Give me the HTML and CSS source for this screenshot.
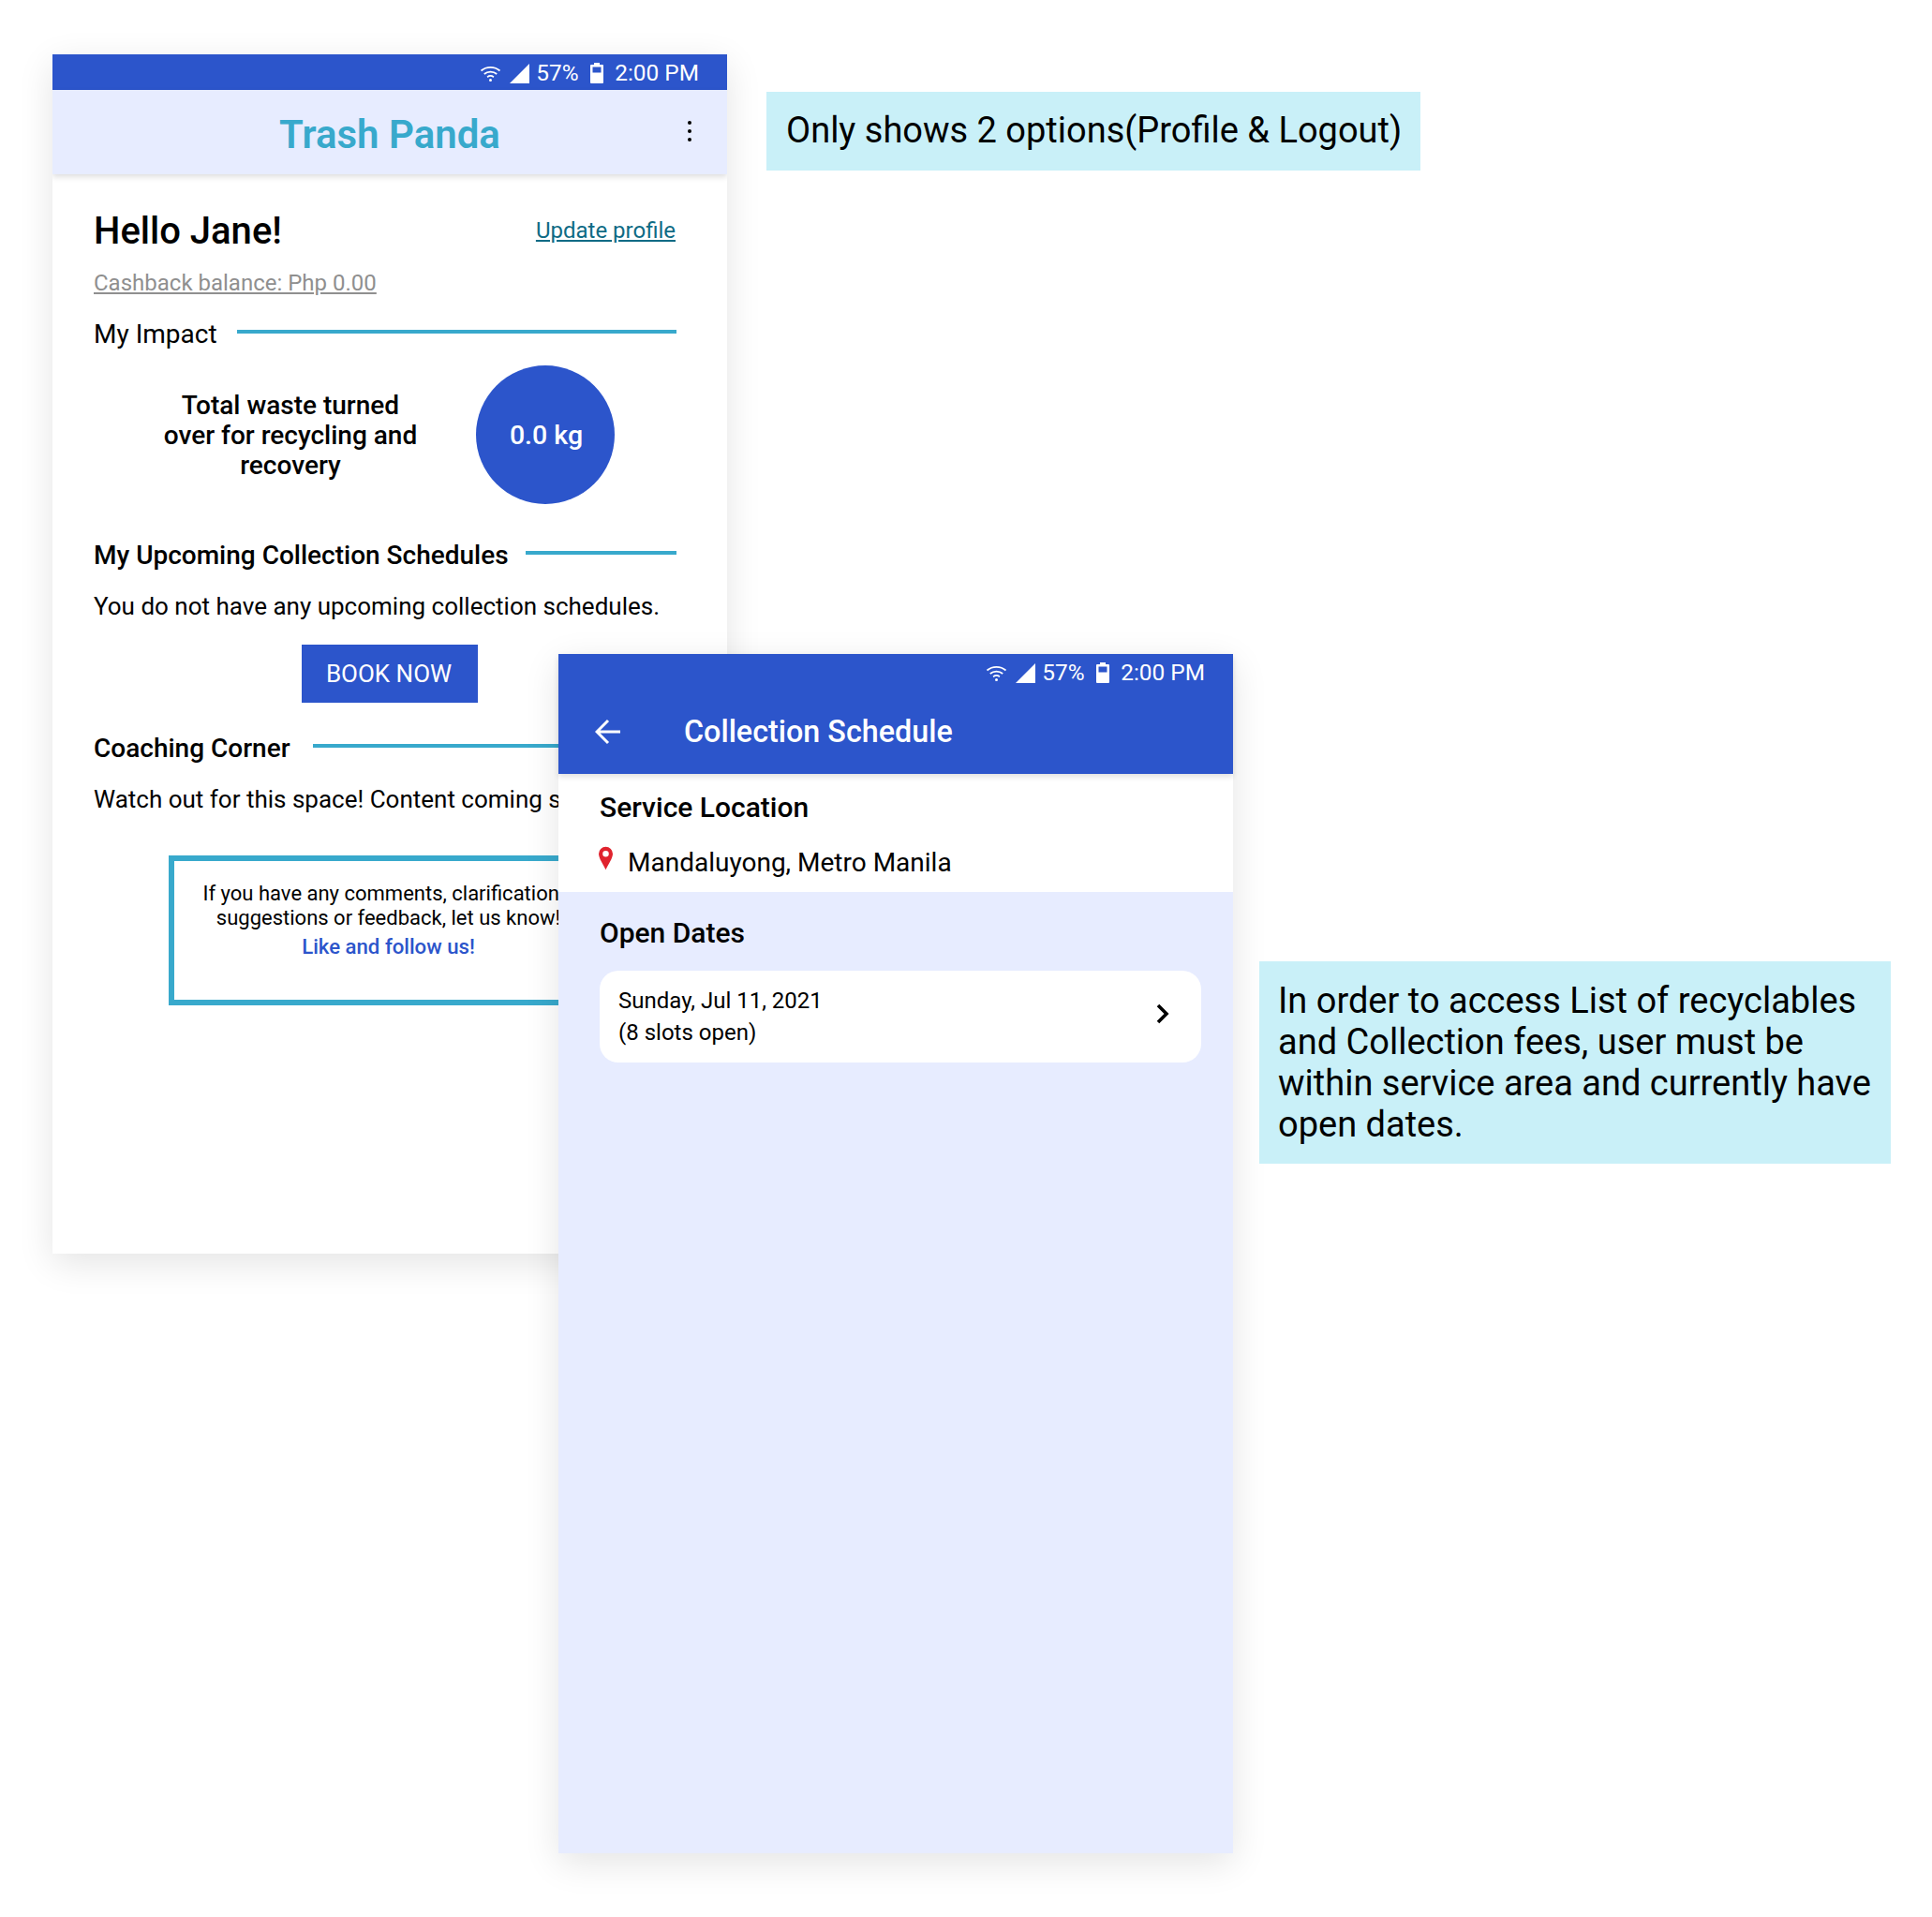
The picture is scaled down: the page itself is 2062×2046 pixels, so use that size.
FILE: index.html
```html
<!DOCTYPE html>
<html lang="en">
<head>
<meta charset="utf-8">
<title>Trash Panda</title>
<link rel="stylesheet" href="styles.css">
</head>
<body>
<section class="phone phone-home">
  <div class="status">
    <svg class="ic-wifi" viewBox="0 0 22 17"><path d="M1 5.5C6.6.6 15.4.6 21 5.5M4.3 9C8 5.8 14 5.8 17.7 9M7.6 12.2C9.500 10.800 12.500 10.800 14.400 12.200" fill="none" stroke="#fff" stroke-width="1.700"/><circle cx="11" cy="15.400" r="1.500" fill="#fff"/></svg>
    <svg class="ic-signal" viewBox="0 0 21 21"><path d="M21 0V21H0Z" fill="#fff"/></svg>
    <span class="pct">57%</span>
    <svg class="ic-batt" viewBox="0 0 14 22"><path d="M4 0H10V2H13A1 1 0 0 1 14 3V21A1 1 0 0 1 13 22H1A1 1 0 0 1 0 21V3A1 1 0 0 1 1 2H4Z" fill="#fff"/><rect x="2.500" y="4.500" width="9" height="6" fill="#2c55cb"/></svg>
    <span class="time">2:00 PM</span>
  </div>
  <header class="appbar">
    <h1 class="brand">Trash Panda</h1>
    <div class="kebab"><i></i><i></i><i></i></div>
  </header>
  <main class="home-body">
    <div class="hello-row">
      <h2 class="hello">Hello Jane!</h2>
      <a class="update">Update profile</a>
    </div>
    <a class="cashback">Cashback balance: Php 0.00</a>
    <div class="rule-head impact-head"><span>My Impact</span><b></b></div>
    <div class="impact">
      <p class="impact-text">Total waste turned<br>over for recycling and<br>recovery</p>
      <div class="circle">0.0 kg</div>
    </div>
    <div class="rule-head strong sched-head"><span>My Upcoming Collection Schedules</span><b></b></div>
    <p class="plain sched-text">You do not have any upcoming collection schedules.</p>
    <div class="book-wrap"><button class="book">BOOK NOW</button></div>
    <div class="rule-head strong coach-head"><span>Coaching Corner</span><b></b></div>
    <p class="plain coach-text">Watch out for this space! Content coming soon.</p>
    <div class="feedback">
      <p>If you have any comments, clarifications,<br>suggestions or feedback, let us know!</p>
      <a>Like and follow us!</a>
    </div>
  </main>
</section>

<section class="phone phone-sched">
  <div class="sched-top">
    <div class="status">
      <svg class="ic-wifi" viewBox="0 0 22 17"><path d="M1 5.5C6.6.6 15.4.6 21 5.5M4.3 9C8 5.8 14 5.8 17.7 9M7.6 12.2C9.500 10.800 12.500 10.800 14.400 12.200" fill="none" stroke="#fff" stroke-width="1.700"/><circle cx="11" cy="15.400" r="1.500" fill="#fff"/></svg>
      <svg class="ic-signal" viewBox="0 0 21 21"><path d="M21 0V21H0Z" fill="#fff"/></svg>
      <span class="pct">57%</span>
      <svg class="ic-batt" viewBox="0 0 14 22"><path d="M4 0H10V2H13A1 1 0 0 1 14 3V21A1 1 0 0 1 13 22H1A1 1 0 0 1 0 21V3A1 1 0 0 1 1 2H4Z" fill="#fff"/><rect x="2.500" y="4.500" width="9" height="6" fill="#2c55cb"/></svg>
      <span class="time">2:00 PM</span>
    </div>
    <div class="sched-bar">
      <svg class="ic-back" viewBox="0 0 28 28"><path d="M27 14H2M14 2L2 14L14 26" fill="none" stroke="#fff" stroke-width="3"/></svg>
      <h1 class="sched-title">Collection Schedule</h1>
    </div>
  </div>
  <div class="location">
    <h2 class="sub">Service Location</h2>
    <div class="loc-row">
      <svg class="ic-pin" viewBox="0 0 16 26"><path fill-rule="evenodd" d="M8 0A8 8 0 0 1 16 8C16 13 11 20 8 26C5 20 0 13 0 8A8 8 0 0 1 8 0ZM8 4.500A3.500 3.500 0 1 0 8 11.500A3.500 3.500 0 1 0 8 4.500Z" fill="#e0232e"/></svg>
      <span>Mandaluyong, Metro Manila</span>
    </div>
  </div>
  <div class="dates">
    <h2 class="sub">Open Dates</h2>
    <div class="date-card">
      <p>Sunday, Jul 11, 2021<br>(8 slots open)</p>
      <svg class="ic-chev" viewBox="0 0 14 22"><path d="M2 2L11 11L2 20" fill="none" stroke="#000" stroke-width="3.600"/></svg>
    </div>
  </div>
</section>

<aside class="note note-one">Only shows 2 options(Profile &amp; Logout)</aside>
<aside class="note note-two">In order to access List of recyclables and Collection fees, user must be within service area and currently have open dates.</aside>
</body>
</html>
```

FILE: styles.css
```css
* { box-sizing: border-box; }
html, body { margin: 0; padding: 0; background: #fff; }
body {
  position: relative;
  width: 2062px;
  height: 2046px;
  overflow: hidden;
  font-family: Roboto, "Liberation Sans", sans-serif;
  color: #000;
}
h1, h2, p { margin: 0; font-weight: 400; }

.phone {
  position: absolute;
  width: 720px;
  height: 1280px;
  box-shadow: 0 10px 36px rgba(0, 0, 0, .11);
  display: flex;
  flex-direction: column;
}
.phone-home { left: 56px; top: 58px; background: #fff; overflow: hidden; }
.phone-sched { left: 596px; top: 698px; background: #e7ecff; }

.status {
  height: 38px;
  flex: none;
  background: #2c55cb;
  color: #fff;
  display: flex;
  align-items: center;
  justify-content: flex-end;
  padding: 2px 30px 0 0;
  font-size: 24.400px;
  line-height: 1;
}
.ic-wifi { width: 23px; height: 17px; margin-right: 9px; }
.ic-signal { width: 21px; height: 21px; margin-right: 7px; }
.pct { width: 44px; margin-right: 14px; }
.ic-batt { width: 14px; height: 22px; margin-right: 12px; }

.appbar {
  height: 90px;
  background: #e7ecff;
  box-shadow: 0 3px 6px rgba(0, 0, 0, .13);
  position: relative;
  z-index: 1;
  flex: none;
  display: flex;
  align-items: center;
  justify-content: center;
  padding-top: 5px;
}
.brand { font-size: 42px; font-weight: 600; color: #38a9cc; }
.kebab {
  position: absolute;
  right: 38px;
  top: 33px;
  display: flex;
  flex-direction: column;
  gap: 5px;
}
.kebab i { width: 4px; height: 4px; border-radius: 50%; background: #000; display: block; }

.home-body { padding: 37px 54px 0 44px; flex: 1; }
.hello-row { display: flex; justify-content: space-between; align-items: center; height: 48px; }
.hello { font-size: 40px; font-weight: 500; line-height: 48px; }
.update { font-size: 24px; color: #0f6b85; text-decoration: underline; margin-right: 1px; position: relative; top: -1px; }
.cashback { display: block; margin-top: 16px; font-size: 24px; line-height: 30px; color: #8f8f8f; text-decoration: underline; }

.rule-head { display: flex; align-items: center; gap: 21px; font-size: 28px; line-height: 34px; }
.rule-head span { position: relative; top: 3px; }
.rule-head b { flex: 1; height: 4px; background: #38a9cc; }
.rule-head.strong { font-weight: 500; }
.rule-head.strong span { top: 3px; }
.impact-head { margin-top: 20px; height: 34px; }

.impact { position: relative; height: 148px; margin-top: 19px; display: flex; align-items: center; padding-top: 2px; }
.impact-text { width: 420px; text-align: center; font-size: 28px; line-height: 32px; font-weight: 500; }
.circle {
  position: absolute;
  left: 408px;
  top: 0;
  width: 148px;
  height: 148px;
  border-radius: 50%;
  background: #2c55cb;
  color: #fff;
  font-size: 28.500px;
  font-weight: 500;
  display: flex;
  align-items: center;
  justify-content: center;
  padding-left: 2px;
}
.sched-head { margin-top: 35px; height: 34px; gap: 18px; }
.plain { font-size: 26px; line-height: 34px; white-space: nowrap; }
.sched-text { margin-top: 23px; }
.book-wrap { display: flex; justify-content: center; margin-top: 24px; padding-left: 10px; }
.book {
  width: 188px;
  height: 62px;
  border: 0;
  padding: 0 2px 0 0;
  background: #2c55cb;
  color: #fff;
  font: 400 26px Roboto, "Liberation Sans", sans-serif;
}
.coach-head { margin-top: 29px; height: 34px; gap: 24px; }
.coach-text { margin-top: 23px; }
.feedback {
  width: 472px;
  height: 160px;
  margin: 43px 0 0 80px;
  border: 6px solid #38a9cc;
  padding: 22px 3px 0 0;
  text-align: center;
  font-size: 22px;
  line-height: 26px;
  white-space: nowrap;
}
.feedback a { display: block; margin-top: 4px; font-weight: 500; color: #2c55cb; font-size: 22.200px; }

.sched-top {
  background: #2c55cb;
  height: 128px;
  flex: none;
  box-shadow: 0 3px 6px rgba(0, 0, 0, .13);
  position: relative;
  z-index: 1;
}
.sched-bar { height: 90px; display: flex; align-items: center; padding-left: 39px; }
.ic-back { width: 28px; height: 28px; margin-right: 67px; }
.sched-title { font-size: 32.300px; font-weight: 500; color: #fff; }

.location { background: #fff; height: 126px; flex: none; padding: 18px 0 0 44px; }
.sub { font-size: 30px; line-height: 36px; font-weight: 500; }
.loc-row { display: flex; align-items: flex-start; margin-top: 24px; font-size: 28px; line-height: 34px; }
.ic-pin { width: 15px; height: 26px; margin: -1px 16px 0 -1px; }

.dates { padding: 26px 34px 0 44px; }
.date-card {
  margin-top: 22px;
  height: 98px;
  background: #fff;
  border-radius: 20px;
  padding: 15px 34px 0 20px;
  display: flex;
  justify-content: space-between;
  font-size: 24px;
  line-height: 34px;
}
.ic-chev { width: 14px; height: 22px; margin-top: 20px; }

.note { position: absolute; background: #c9f0f8; font-size: 38px; line-height: 44px; }
.note-one { left: 818px; top: 98px; width: 698px; height: 84px; padding: 19px 0 0 21px; white-space: nowrap; }
.note-two { left: 1344px; top: 1026px; width: 674px; height: 216px; padding: 20px 10px 0 20px; }
```
